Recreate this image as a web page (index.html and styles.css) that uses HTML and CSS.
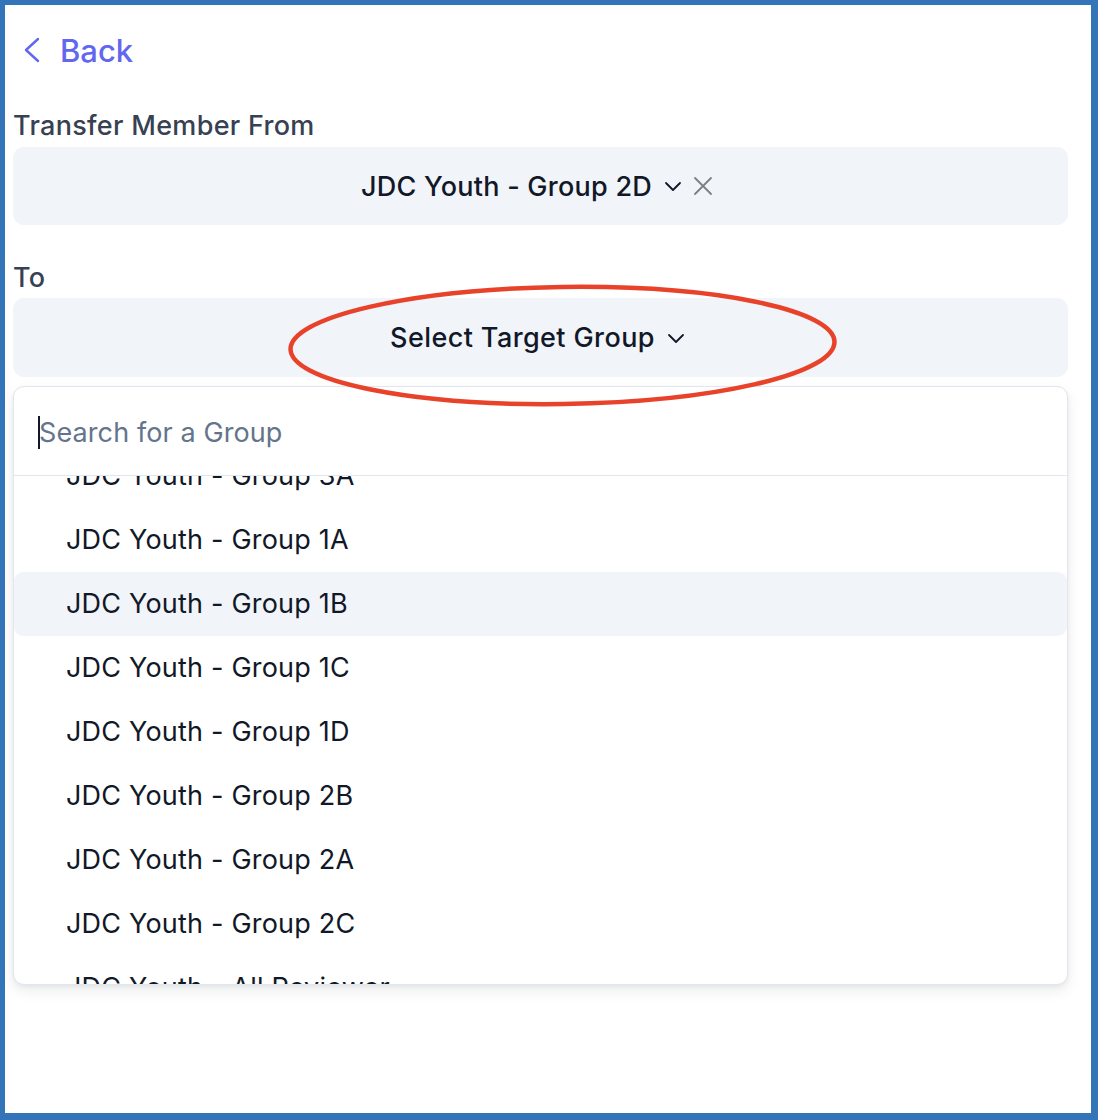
FILE: index.html
```html
<!DOCTYPE html>
<html lang="en">
<head>
<meta charset="utf-8">
<title>Transfer Member</title>
<link rel="stylesheet" href="styles.css">
</head>
<body>
<div class="frame">
  <a class="back" href="#">
    <svg class="back-icon" width="18" height="26" viewBox="0 0 18 26"><path d="M15 2 L3 13 L15 24" fill="none" stroke="#6366f1" stroke-width="2.4" stroke-linecap="round" stroke-linejoin="round"/></svg>
    <span>Back</span>
  </a>

  <div class="label">Transfer Member From</div>
  <div class="select">
    <span class="select-text">JDC Youth - Group 2D</span>
    <svg class="chev" width="18" height="12" viewBox="0 0 18 12"><path d="M2 3 L9 10 L16 3" fill="none" stroke="#111827" stroke-width="1.8" stroke-linecap="round" stroke-linejoin="round"/></svg>
    <svg class="clear" width="20" height="20" viewBox="0 0 20 20"><path d="M2 2 L18 18 M18 2 L2 18" fill="none" stroke="#7b7f87" stroke-width="1.8" stroke-linecap="round"/></svg>
  </div>

  <div class="label label-to">To</div>
  <div class="select select-target">
    <span class="select-text">Select Target Group</span>
    <svg class="chev" width="18" height="12" viewBox="0 0 18 12"><path d="M2 3 L9 10 L16 3" fill="none" stroke="#111827" stroke-width="1.8" stroke-linecap="round" stroke-linejoin="round"/></svg>
  </div>

  <div class="dropdown">
    <div class="search">
      <span class="caret"></span><span class="placeholder">Search for a Group</span>
    </div>
    <div class="list">
      <ul class="items">
        <li class="item">JDC Youth - Group 3A</li>
        <li class="item">JDC Youth - Group 1A</li>
        <li class="item item-active">JDC Youth - Group 1B</li>
        <li class="item">JDC Youth - Group 1C</li>
        <li class="item">JDC Youth - Group 1D</li>
        <li class="item">JDC Youth - Group 2B</li>
        <li class="item">JDC Youth - Group 2A</li>
        <li class="item">JDC Youth - Group 2C</li>
        <li class="item">JDC Youth - All Reviewer</li>
      </ul>
    </div>
  </div>
</div>

<svg class="annotation" width="1098" height="1120" viewBox="0 0 1098 1120">
  <ellipse cx="562.5" cy="345.5" rx="272" ry="58.5" transform="rotate(-0.8 562.5 345.5)" fill="none" stroke="#e8432a" stroke-width="4.5"/>
</svg>
</body>
</html>
```

FILE: styles.css
```css
html, body {
  margin: 0;
  padding: 0;
  background: #ffffff;
}

body {
  font-family: Inter, "Noto Sans", "Liberation Sans", sans-serif;
  color: #111827;
  position: relative;
  width: 1098px;
  height: 1120px;
  overflow: hidden;
}

.frame {
  box-sizing: border-box;
  width: 1098px;
  height: 1120px;
  border-style: solid;
  border-color: #3474b9;
  border-width: 5px 7px 7px 5px;
  padding: 25px 23px 0 8px;
  display: flex;
  flex-direction: column;
}

.back {
  display: flex;
  align-items: center;
  height: 40px;
  text-decoration: none;
  color: #6366f1;
  font-size: 31px;
  font-weight: 500;
  margin-bottom: 40px;
  align-self: flex-start;
}

.back-icon {
  margin-left: 10px;
  margin-right: 19px;
}

.label {
  font-size: 27px;
  font-weight: 500;
  letter-spacing: 0.3px;
  line-height: 32px;
  height: 32px;
  color: #374151;
  margin-bottom: 5px;
}

.label-to {
  margin-top: 37px;
  margin-bottom: 4px;
}

.select {
  height: 78px;
  background: #f1f4f9;
  border-radius: 11px;
  display: flex;
  align-items: center;
  justify-content: center;
  font-size: 27px;
  font-weight: 500;
  letter-spacing: 0.25px;
  color: #111827;
  padding-right: 7px;
}

.select-target {
  height: 79px;
  padding-right: 6px;
  letter-spacing: 0.4px;
}

.chev {
  margin-left: 12px;
}

.clear {
  margin-left: 11px;
}

.dropdown {
  margin-top: 9px;
  height: 599px;
  box-sizing: border-box;
  border: 1.5px solid #e2e6ee;
  border-radius: 11px;
  background: #ffffff;
  box-shadow: 0 6px 14px rgba(15, 23, 42, 0.08), 0 2px 4px rgba(15, 23, 42, 0.05);
  display: flex;
  flex-direction: column;
  overflow: hidden;
}

.search {
  height: 89px;
  flex: none;
  display: flex;
  align-items: center;
  padding-left: 24px;
  padding-top: 3px;
  border-bottom: 1.5px solid #e2e6ee;
  font-size: 27px;
  letter-spacing: 0.1px;
  color: #64748b;
  box-sizing: border-box;
}

.caret {
  width: 2px;
  height: 33px;
  background: #111827;
  margin-right: -1px;
}

.list {
  flex: 1;
  overflow: hidden;
}

.items {
  list-style: none;
  margin: -32px 0 0 0;
  padding: 0;
}

.item {
  height: 64px;
  line-height: 64px;
  padding-left: 52px;
  font-size: 27px;
  letter-spacing: 0.2px;
  color: #111827;
  border-radius: 9px;
}

.item-active {
  background: #f1f4f9;
}

.annotation {
  position: absolute;
  top: 0;
  left: 0;
  pointer-events: none;
}
```
